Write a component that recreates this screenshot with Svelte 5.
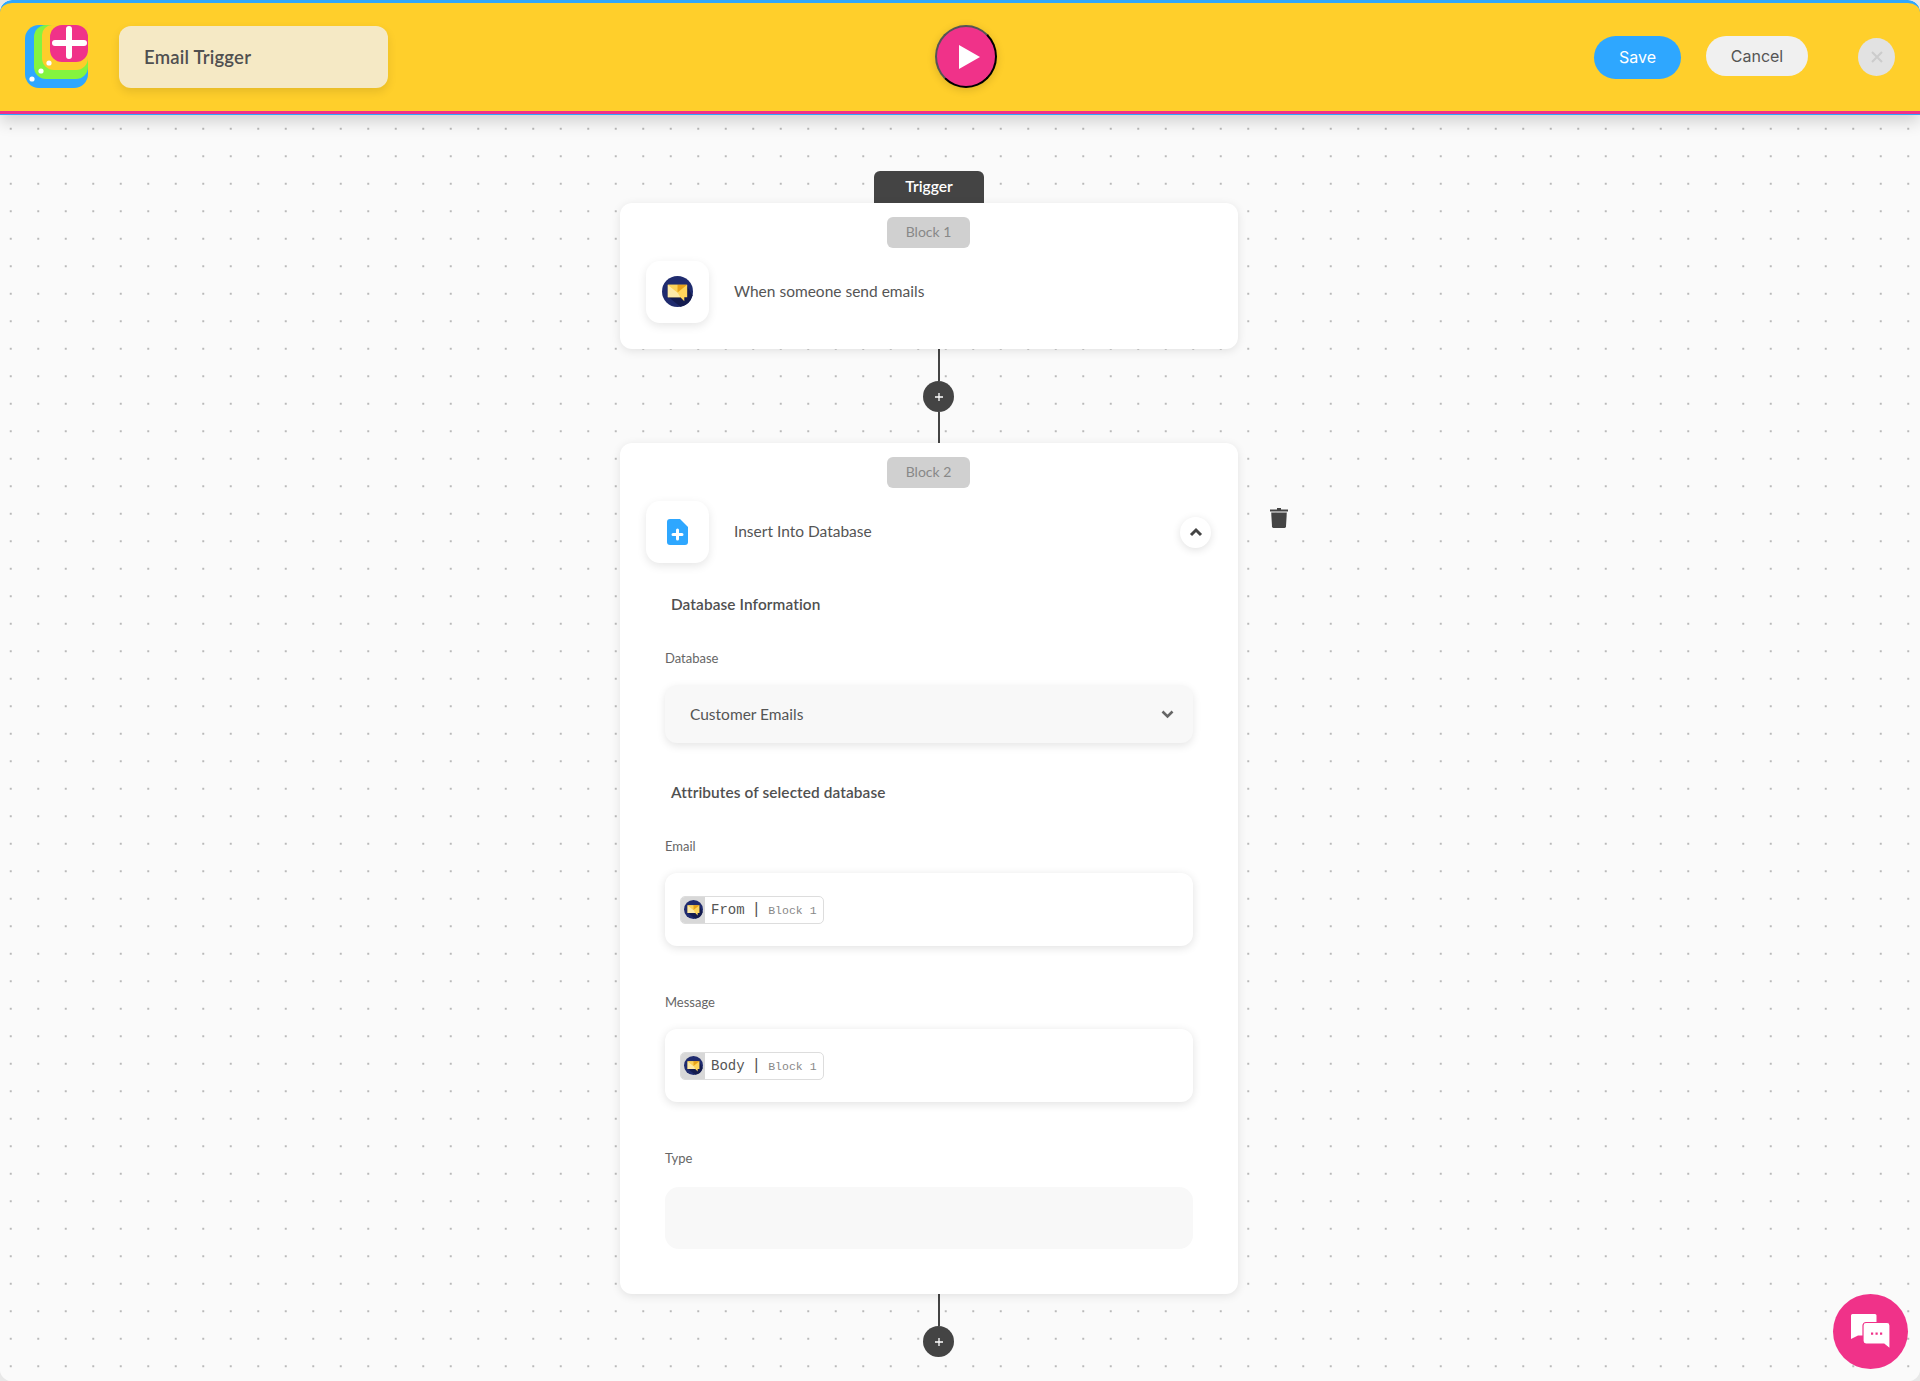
<script>
  const blocks = [
    { label: 'Email', chip: 'From' },
    { label: 'Message', chip: 'Body' }
  ];
</script>

{#snippet mailIcon(size)}
  <svg width={size} height={size} viewBox="0 0 32 32">
    <circle cx="16" cy="16" r="16" fill="#1f2b6e" />
    <path d="M7 22 L25 9 L31.5 20 A16 16 0 0 1 19 31.7 Z" fill="#141c4f" />
    <path d="M6 9 H26 V22 H23 V26 L19 22 H6 Z" fill="#ffd65c" />
    <path d="M6 9 L16 17 L19 22 H6 Z" fill="#fdeaa8" />
    <path d="M6 9 H16 V17 Z" fill="#fbd25a" />
    <path d="M16 9 H26 L16 17 Z" fill="#e9a31a" />
  </svg>
{/snippet}

{#snippet plus()}
  <div class="connector"></div>
  <button class="add">
    <svg width="10" height="10" viewBox="0 0 10 10"><path d="M5 1 V9 M1 5 H9" stroke="#fff" stroke-width="1.3" /></svg>
  </button>
{/snippet}

<div class="app">
  <header class="topbar">
    <svg class="logo" width="63" height="63" viewBox="0 0 63 63">
      <rect width="63" height="63" rx="14" fill="#2ea7ff" />
      <path d="M9 12 A12 12 0 0 1 21 0 H63 V42 A12 12 0 0 1 51 54 H21 A12 12 0 0 1 9 42 Z" fill="#84f43f" />
      <path d="M17 10 A10 10 0 0 1 27 0 H63 V33 A12 12 0 0 1 51 45 H29 A12 12 0 0 1 17 33 Z" fill="#fdcd2b" />
      <rect x="25" width="38" height="37" rx="12" fill="#f03289" />
      <path d="M44 4 V31 M30 18 H59" stroke="#fff" stroke-width="6" stroke-linecap="round" />
      <circle cx="7" cy="54" r="2.6" fill="#fff" />
      <circle cx="16" cy="46" r="2.6" fill="#fff" />
      <circle cx="24" cy="38" r="2.6" fill="#fff" />
    </svg>
    <div class="title">Email Trigger</div>
    <button class="play">
      <svg width="21" height="24" viewBox="0 0 21 24"><path d="M0 0 V24 L21 12 Z" fill="#fff" /></svg>
    </button>
    <button class="save">Save</button>
    <button class="cancel">Cancel</button>
    <button class="close">
      <svg width="14" height="14" viewBox="0 0 14 14"><path d="M2 2 L12 12 M12 2 L2 12" stroke="#ccc" stroke-width="2" /></svg>
    </button>
  </header>

  <main class="canvas">
    <div class="flow">
      <div class="tab">Trigger</div>
      <section class="card first">
        <div class="pill">Block 1</div>
        <div class="row">
          <div class="iconbox">{@render mailIcon(31)}</div>
          <span class="rowtext">When someone send emails</span>
        </div>
      </section>

      {@render plus()}
      <div class="connector short"></div>

      <section class="card">
        <div class="pill">Block 2</div>
        <div class="row">
          <div class="iconbox">
            <svg width="21" height="26" viewBox="0 0 21 26">
              <path d="M3 0 H13 L21 8 V23 A3 3 0 0 1 18 26 H3 A3 3 0 0 1 0 23 V3 A3 3 0 0 1 3 0 Z" fill="#2ea7ff" />
              <path d="M10.5 11 V20 M6 15.5 H15" stroke="#fff" stroke-width="3" stroke-linecap="round" />
            </svg>
          </div>
          <span class="rowtext">Insert Into Database</span>
          <button class="collapse">
            <svg width="14" height="10" viewBox="0 0 14 10"><path d="M2 8 L7 3 L12 8" fill="none" stroke="#444" stroke-width="3" /></svg>
          </button>
        </div>

        <h3>Database Information</h3>
        <div class="label first-label">Database</div>
        <div class="select">
          <span>Customer Emails</span>
          <svg width="13" height="9" viewBox="0 0 13 9"><path d="M1.5 1.5 L6.5 6.5 L11.5 1.5" fill="none" stroke="#666" stroke-width="2.6" /></svg>
        </div>

        <h3 class="attrs">Attributes of selected database</h3>
        {#each blocks as b, i}
          <div class="label" class:first-label={i === 0}>{b.label}</div>
          <div class="field">
            <div class="chip">
              <span class="chipicon">{@render mailIcon(19)}</span>
              <span class="chipname">{b.chip}</span>
              <span class="chipsep">|</span>
              <span class="chipblock">Block 1</span>
            </div>
          </div>
        {/each}

        <div class="label">Type</div>
        <div class="typebox"></div>

        <button class="trash">
          <svg width="18" height="20" viewBox="0 0 18 20">
            <path d="M7 0 H11 V1.5 H18 V3.4 H0 V1.5 H7 Z" fill="#444" />
            <path d="M1.2 4.6 H16.8 L16 18.6 A1.5 1.5 0 0 1 14.6 20 H3.4 A1.5 1.5 0 0 1 2 18.6 Z" fill="#444" />
          </svg>
        </button>
      </section>

      {@render plus()}
    </div>

    <button class="chat">
      <svg width="40" height="36" viewBox="0 0 40 36">
        <path d="M1.5 0 H24 A1.5 1.5 0 0 1 25.5 1.5 V20 A1.5 1.5 0 0 1 24 21.5 H7 L0 25 V1.5 A1.5 1.5 0 0 1 1.5 0 Z" fill="#fff" />
        <path d="M15 8.5 H36 A3 3 0 0 1 39 11.5 V35 L33 30 H15 A3 3 0 0 1 12 27 V11.5 A3 3 0 0 1 15 8.5 Z" fill="#fff" stroke="#f03289" stroke-width="1.2" />
        <path d="M20 18.5 h2.2 v2.2 h-2.2 Z M24.5 18.5 h2.2 v2.2 h-2.2 Z M29 18.5 h2.2 v2.2 h-2.2 Z" fill="#f03289" />
      </svg>
    </button>
  </main>
</div>

<style>
  :global(body) {
    background: #e8e8e8;
  }

  .app {
    width: 1920px;
    height: 1381px;
    border-radius: 12px;
    overflow: hidden;
    display: flex;
    flex-direction: column;
    position: relative;
    font-family: Lato, "Open Sans", sans-serif;
    color: #444;
    background: #fafafa;
  }

  button {
    border: none;
    padding: 0;
    cursor: pointer;
    font-family: inherit;
  }

  .topbar {
    box-sizing: border-box;
    height: 114px;
    flex-shrink: 0;
    display: flex;
    align-items: center;
    padding: 0 25px 1px 25px;
    background: #ffcf2b;
    border-top: 3px solid #2ea7ff;
    border-bottom: 3px solid #f03289;
    border-radius: 12px 12px 0 0;
    box-shadow: 0 1px 0 #2ea7ff, 0 8px 16px rgba(0, 0, 0, 0.16);
    position: relative;
    z-index: 2;
  }

  .logo {
    flex-shrink: 0;
  }

  .title {
    box-sizing: border-box;
    width: 269px;
    height: 62px;
    margin-left: 31px;
    padding: 0 0 0 25px;
    display: flex;
    align-items: center;
    background: #f5e9c5;
    border-radius: 12px;
    box-shadow: 0 4px 10px rgba(0, 0, 0, 0.1);
    font-size: 18.5px;
    font-weight: 600;
    letter-spacing: 0.2px;
    color: #505050;
  }

  .play {
    box-sizing: border-box;
    width: 62px;
    height: 63px;
    margin-left: 547px;
    border-radius: 50%;
    background: #f03289;
    border: 2px solid;
    border-color: #555 #000 #000 #555;
    display: flex;
    align-items: center;
    justify-content: center;
    padding-left: 6px;
    box-shadow: 0 2px 8px rgba(0, 0, 0, 0.15);
  }

  .save,
  .cancel {
    font-family: Inter, "Liberation Sans", sans-serif;
    font-size: 16px;
    border-radius: 22px;
  }

  .save {
    width: 87px;
    height: 43px;
    margin-left: auto;
    margin-top: 1px;
    background: #2ea7ff;
    color: #fff;
  }

  .cancel {
    width: 102px;
    height: 40px;
    margin-left: 25px;
    margin-top: -1px;
    background: #f0f0f0;
    color: #555;
  }

  .close {
    width: 37px;
    height: 38px;
    margin-left: 50px;
    margin-top: 1px;
    border-radius: 50%;
    background: #e2e2e2;
    display: flex;
    align-items: center;
    justify-content: center;
  }

  .canvas {
    flex: 1;
    position: relative;
    background-color: #fafafa;
    background-image: radial-gradient(circle at center, #8c8c8c 0.55px, transparent 0.9px);
    background-size: 27.5px 27.5px;
    background-position: -3px 1px;
  }

  .flow {
    width: 618px;
    margin-left: 620px;
    padding-top: 57px;
    display: flex;
    flex-direction: column;
    align-items: flex-start;
  }

  .tab {
    box-sizing: border-box;
    width: 110px;
    height: 32px;
    margin-left: 254px;
    padding-bottom: 2px;
    display: flex;
    align-items: center;
    justify-content: center;
    background: #444;
    color: #fff;
    font-size: 15.6px;
    font-weight: 600;
    border-radius: 6px 6px 0 0;
  }

  .card {
    box-sizing: border-box;
    width: 618px;
    padding: 14px 26px 45px;
    background: #fff;
    border-radius: 12px;
    box-shadow: 0 2px 10px rgba(0, 0, 0, 0.1);
    display: flex;
    flex-direction: column;
    position: relative;
  }

  .card.first {
    height: 146px;
    padding-bottom: 0;
  }

  .pill {
    box-sizing: border-box;
    width: 83px;
    height: 31px;
    margin-left: 241px;
    padding-bottom: 2px;
    display: flex;
    align-items: center;
    justify-content: center;
    background: #d0d0d0;
    color: #888;
    font-size: 14px;
    border-radius: 6px;
  }

  .row {
    display: flex;
    align-items: center;
    margin-top: 13px;
    height: 62px;
  }

  .iconbox {
    width: 63px;
    height: 62px;
    margin-top: -1px;
    border-radius: 14px;
    background: #fff;
    box-shadow: 0 3px 10px rgba(0, 0, 0, 0.1);
    display: flex;
    align-items: center;
    justify-content: center;
  }

  .rowtext {
    margin-left: 25px;
    padding-bottom: 2px;
    font-size: 15.5px;
    color: #555;
  }

  .collapse {
    width: 31px;
    height: 31px;
    margin-left: auto;
    margin-right: 1px;
    border-radius: 50%;
    background: #fff;
    box-shadow: 0 2px 8px rgba(0, 0, 0, 0.12);
    display: flex;
    align-items: center;
    justify-content: center;
  }

  h3 {
    margin: 31px 0 0 25px;
    height: 20px;
    line-height: 20px;
    font-size: 15.4px;
    font-weight: 600;
    letter-spacing: 0.1px;
    color: #505050;
  }

  h3.attrs {
    margin-top: 39px;
  }

  .label {
    margin: 48px 0 0 19px;
    height: 16px;
    line-height: 16px;
    font-size: 13px;
    color: #666;
  }

  .label.first-label {
    margin-top: 36px;
  }

  .select {
    box-sizing: border-box;
    width: 528px;
    height: 58px;
    margin: 19px 0 0 19px;
    padding: 0 19px 0 25px;
    display: flex;
    align-items: center;
    justify-content: space-between;
    background: #f8f8f8;
    border-radius: 12px;
    box-shadow: 0 3px 8px rgba(0, 0, 0, 0.1);
    font-size: 15.5px;
    color: #555;
  }

  .field {
    box-sizing: border-box;
    width: 528px;
    height: 73px;
    margin: 19px 0 0 19px;
    padding-left: 15px;
    display: flex;
    align-items: center;
    background: #fff;
    border-radius: 12px;
    box-shadow: 0 2px 10px rgba(0, 0, 0, 0.12);
  }

  .chip {
    box-sizing: border-box;
    width: 144px;
    height: 28px;
    display: flex;
    align-items: center;
    border: 1px solid #ddd;
    border-radius: 5px;
    overflow: hidden;
    font-family: "Liberation Mono", "DejaVu Sans Mono", monospace;
    color: #555;
  }

  .chipicon {
    width: 24px;
    height: 100%;
    flex-shrink: 0;
    background: #d8d8d8;
    display: flex;
    align-items: center;
    justify-content: center;
  }

  .chipname {
    margin-left: 6px;
    padding-top: 1px;
    font-size: 14px;
  }

  .chipsep {
    margin-left: 7px;
    padding-top: 1px;
    font-size: 16px;
  }

  .chipblock {
    margin-left: 7px;
    padding-top: 2px;
    font-size: 11.5px;
    color: #888;
  }

  .typebox {
    width: 528px;
    height: 62px;
    margin: 21px 0 0 19px;
    background: #f8f8f8;
    border-radius: 14px;
  }

  .trash {
    position: absolute;
    left: 650px;
    top: 65px;
    background: none;
    line-height: 0;
  }

  .connector {
    width: 2px;
    height: 32px;
    margin-left: 318px;
    background: #444;
  }

  .connector.short {
    height: 31px;
  }

  .add {
    width: 31px;
    height: 31px;
    margin-left: 303px;
    border-radius: 50%;
    background: #444;
    display: flex;
    align-items: center;
    justify-content: center;
  }

  .chat {
    position: absolute;
    right: 12px;
    bottom: 12px;
    width: 75px;
    height: 75px;
    border-radius: 50%;
    background: #f03289;
    display: flex;
    align-items: center;
    justify-content: center;
  }
</style>
